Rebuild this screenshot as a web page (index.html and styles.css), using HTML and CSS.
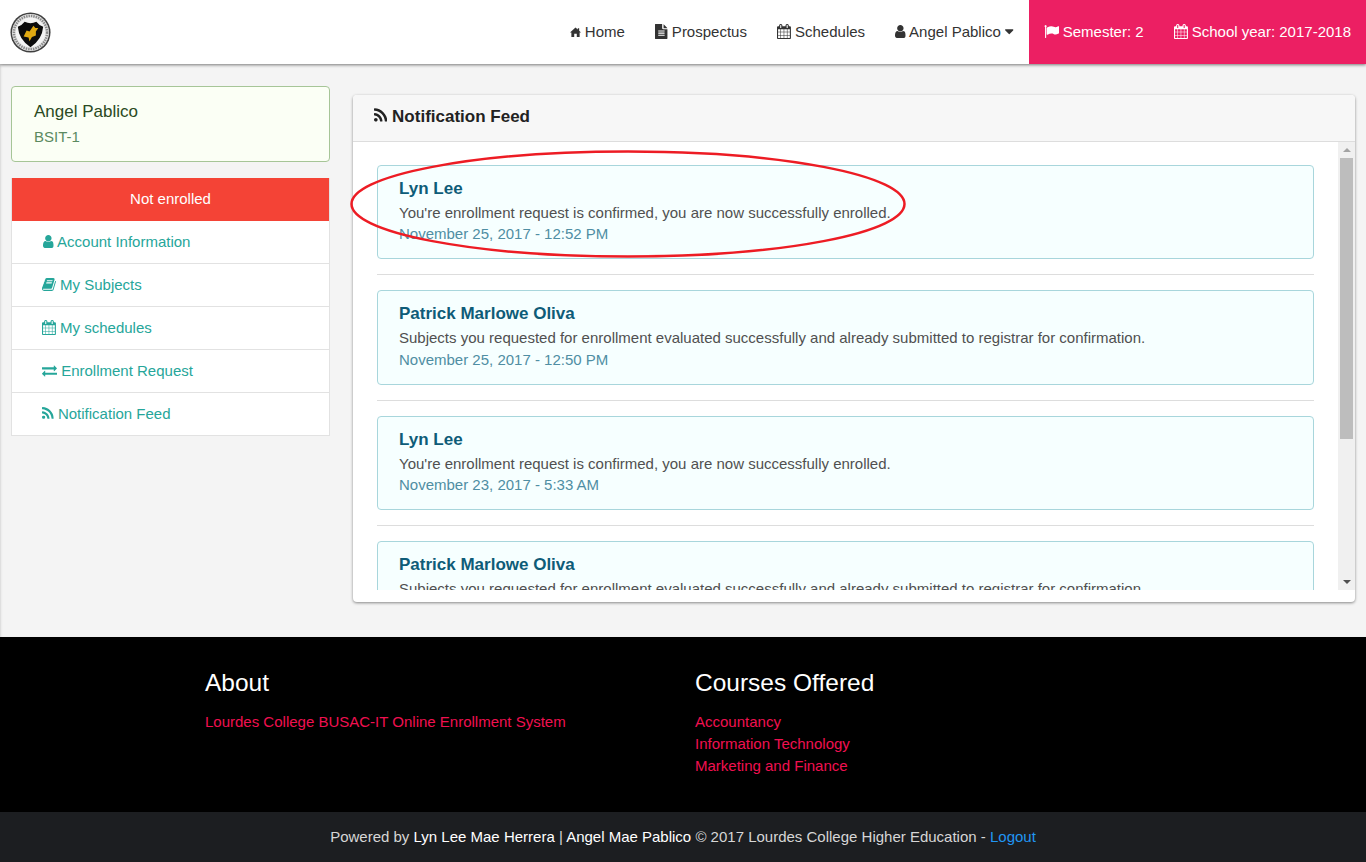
FILE: index.html
```html
<!DOCTYPE html>
<html lang="en">

<head>
    <meta charset="UTF-8">
    <meta name="viewport" content="width=device-width, initial-scale=1.0">
    <title>Notification Feed</title>
    <link rel="stylesheet" href="styles.css">
</head>

<body>
    <svg class="sprite" xmlns="http://www.w3.org/2000/svg">
        <symbol id="i-home" viewBox="0 0 12 12"><path d="M6 1 L8.500 3.200 V1.800 H10 V4.600 L12 6.500 H10.500 V11.500 H7.400 V8 H4.600 V11.500 H1.500 V6.500 H0 Z"/></symbol>
        <symbol id="i-file" viewBox="128 0 1536 1792"><path d="M1596 476q14 14 28 36h-472v-472q22 14 36 28zm-476 164h504v1056q0 40-28 68t-68 28h-1344q-40 0-68-28t-28-68v-1600q0-40 28-68t68-28h800v504q0 40 28 68t68 28zm160 736v-64q0-14-9-23t-23-9h-704q-14 0-23 9t-9 23v64q0 14 9 23t23 9h704q14 0 23-9t9-23zm0-256v-64q0-14-9-23t-23-9h-704q-14 0-23 9t-9 23v64q0 14 9 23t23 9h704q14 0 23-9t9-23zm0-256v-64q0-14-9-23t-23-9h-704q-14 0-23 9t-9 23v64q0 14 9 23t23 9h704q14 0 23-9t9-23z"/></symbol>
        <symbol id="i-calendar" viewBox="0 0 1664 1792"><path d="M128 1664h288v-288h-288v288zm352 0h320v-288h-320v288zm-352-352h288v-320h-288v320zm352 0h320v-320h-320v320zm-352-384h288v-288h-288v288zm736 736h320v-288h-320v288zm-384-736h320v-288h-320v288zm768 736h288v-288h-288v288zm-384-352h320v-320h-320v320zm-352-864v-288q0-13-9.500-22.500t-22.500-9.500h-64q-13 0-22.500 9.500t-9.500 22.500v288q0 13 9.500 22.500t22.500 9.500h64q13 0 22.500-9.500t9.500-22.500zm736 864h288v-320h-288v320zm-384-384h320v-288h-320v288zm384 0h288v-288h-288v288zm32-480v-288q0-13-9.500-22.500t-22.500-9.500h-64q-13 0-22.500 9.500t-9.500 22.500v288q0 13 9.500 22.500t22.500 9.500h64q13 0 22.500-9.500t9.500-22.500zm384-64v1280q0 52-38 90t-90 38h-1408q-52 0-90-38t-38-90v-1280q0-52 38-90t90-38h128v-96q0-66 47-113t113-47h64q66 0 113 47t47 113v96h384v-96q0-66 47-113t113-47h64q66 0 113 47t47 113v96h128q52 0 90 38t38 90z"/></symbol>
        <symbol id="i-user" viewBox="256 0 1280 1792"><path d="M1536 1399q0 109-62.500 187t-150.500 78h-854q-88 0-150.500-78t-62.500-187q0-85 8.500-160.500t31.500-152 58.500-131 94-89 134.500-34.500q131 128 313 128t313-128q76 0 134.500 34.500t94 89 58.500 131 31.500 152 8.500 160.500zm-256-887q0 159-112.500 271.500t-271.500 112.500-271.500-112.500-112.500-271.500 112.500-271.500 271.500-112.500 271.500 112.500 112.500 271.500z"/></symbol>
        <symbol id="i-caret" viewBox="384 0 1024 1792"><path d="M1408 704q0 26-19 45l-448 448q-19 19-45 19t-45-19l-448-448q-19-19-19-45t19-45 45-19h896q26 0 45 19t19 45z"/></symbol>
        <symbol id="i-flag" viewBox="0 0 1792 1792"><path d="M320 256q0 72-64 110v1266q0 13-9.500 22.500t-22.500 9.500h-64q-13 0-22.500-9.500t-9.500-22.500v-1266q-64-38-64-110 0-53 37.500-90.500t90.500-37.500 90.500 37.500 37.500 90.500zm1472 64v763q0 25-12.500 38.500t-39.500 27.500q-215 116-369 116-61 0-123.500-22t-108.500-48-115.500-48-142.500-22q-192 0-464 146-17 9-33 9-26 0-45-19t-19-45v-742q0-32 31-55 21-14 79-43 236-120 421-120 107 0 200 29t219 88q38 19 88 19 54 0 117.500-21t110-47 88-47 54.500-21q26 0 45 19t19 45z"/></symbol>
        <symbol id="i-book" viewBox="64 0 1664 1792"><path d="M1703 478q40 57 18 129l-275 906q-19 64-76.500 107.500t-122.500 43.500h-923q-77 0-148.500-53.500t-99.500-131.500q-24-67-2-127 0-4 3-27t4-37q1-8-3-21.500t-3-19.500q2-11 8-21t16.500-23.500 16.500-23.500q23-38 45-91.500t30-91.500q3-10 .5-30t-.5-28q3-11 17-28t17-23q21-36 42-92t25-90q1-9-2.500-32t.5-28q4-13 22-30.500t22-22.500q19-26 42.500-84.500t27.500-96.500q1-8-3-25.500t-2-26.500q2-8 9-18t18-23 17-21q8-12 16.500-30.500t15-35 16-36 19.500-32 26.500-23.500 36-11.500 47.500 5.500l-1 3q38-9 51-9h761q74 0 114 56t18 130l-274 906q-36 119-71.500 153.500t-128.500 34.500h-869q-27 0-38 15-11 16-1 43 24 70 144 70h923q29 0 56-15.500t35-41.500l300-987q7-22 5-57 38 15 59 43zm-1064 2q-4 13 2 22.500t20 9.500h608q13 0 25.500-9.500t16.500-22.500l21-64q4-13-2-22.500t-20-9.500h-608q-13 0-25.500 9.500t-16.500 22.500zm-83 256q-4 13 2 22.500t20 9.500h608q13 0 25.500-9.500t16.500-22.500l21-64q4-13-2-22.500t-20-9.500h-608q-13 0-25.500 9.500t-16.500 22.500z"/></symbol>
        <symbol id="i-exchange" viewBox="0 0 1792 1792"><path d="M1792 1184v192q0 13-9.500 22.500t-22.500 9.500h-1376v192q0 13-9.500 22.500t-22.500 9.500q-12 0-24-10l-319-320q-9-9-9-22 0-14 9-23l320-320q9-9 23-9 13 0 22.500 9.500t9.500 22.500v192h1376q13 0 22.500 9.500t9.500 22.500zm0-544q0 14-9 23l-320 320q-9 9-23 9-13 0-22.500-9.500t-9.500-22.500v-192h-1376q-13 0-22.500-9.500t-9.500-22.500v-192q0-13 9.500-22.500t22.500-9.500h1376v-192q0-14 9-23t23-9q12 0 24 10l319 319q9 9 9 23z"/></symbol>
        <symbol id="i-rss" viewBox="192 0 1408 1792"><path d="M576 1344q0 80-56 136t-136 56-136-56-56-136 56-136 136-56 136 56 56 136zm512 123q2 28-17 48-18 21-47 21h-135q-25 0-43-16.500t-20-41.500q-22-229-184.500-391.500t-391.500-184.500q-25-2-41.500-20t-16.500-43v-135q0-29 21-47 17-17 43-17h5q160 13 306 80.500t259 181.500q114 113 181.500 259t80.500 306zm512 2q2 27-18 47-18 20-46 20h-143q-26 0-44.500-17.500t-19.500-42.500q-12-215-101-408.500t-231.500-336-336-231.500-408.500-102q-25-1-42.500-19.500t-17.500-43.500v-143q0-28 20-46 18-18 44-18h3q262 13 501.500 120t425.500 294q187 186 294 425.500t120 501.500z"/></symbol>
    </svg>

    <header class="topbar">
        <a class="brand" href="#">
            <svg class="logo" viewBox="0 0 42 42" xmlns="http://www.w3.org/2000/svg">
                <circle cx="21" cy="21" r="20.500" fill="#3f3f3f"/>
                <circle cx="21" cy="21" r="19" fill="#e4e4e4"/>
                <circle cx="21" cy="21" r="17" fill="none" stroke="#8a8a8a" stroke-width="2.600" stroke-dasharray="1.500 1"/>
                <circle cx="21" cy="21" r="15" fill="#f4f4f4"/>
                <path d="M8 15 Q12 14 15 10 Q21 13 27 10 Q30 14 34 15 Q33 28 21 36 Q9 28 8 15 Z" fill="#0c0c0c"/>
                <path d="M14 25 L17 19 L20 20 L24 14 L26 16.500 L29 16.500 L26.500 20 L26.500 24 L22.500 25.500 L20 30 L19 26 Z" fill="#e0a912"/>
            </svg>
        </a>
        <nav class="mainnav">
            <a href="#"><svg class="ico i-home"><use href="#i-home"/></svg> Home</a>
            <a href="#"><svg class="ico i-file"><use href="#i-file"/></svg> Prospectus</a>
            <a href="#"><svg class="ico i-cal"><use href="#i-calendar"/></svg> Schedules</a>
            <a href="#"><svg class="ico i-user"><use href="#i-user"/></svg> Angel Pablico <svg class="ico i-caret"><use href="#i-caret"/></svg></a>
        </nav>
        <div class="termbox">
            <span><svg class="ico"><use href="#i-flag"/></svg> Semester: 2</span>
            <span><svg class="ico i-cal"><use href="#i-calendar"/></svg> School year: 2017-2018</span>
        </div>
    </header>

    <main class="content">
        <aside class="sidebar">
            <div class="profile">
                <h4>Angel Pablico</h4>
                <p>BSIT-1</p>
            </div>
            <ul class="sidemenu">
                <li class="status">Not enrolled</li>
                <li><a href="#"><svg class="ico i-user"><use href="#i-user"/></svg> Account Information</a></li>
                <li><a href="#"><svg class="ico i-cal"><use href="#i-book"/></svg> My Subjects</a></li>
                <li><a href="#"><svg class="ico i-cal"><use href="#i-calendar"/></svg> My schedules</a></li>
                <li><a href="#"><svg class="ico"><use href="#i-exchange"/></svg> Enrollment Request</a></li>
                <li><a href="#"><svg class="ico i-rss"><use href="#i-rss"/></svg> Notification Feed</a></li>
            </ul>
        </aside>

        <section class="feed">
            <div class="feed-head"><svg class="ico i-rss"><use href="#i-rss"/></svg> Notification Feed</div>
            <div class="feed-wrap">
                <div class="feed-body">
                    <div class="note">
                        <h5>Lyn Lee</h5>
                        <p>You're enrollment request is confirmed, you are now successfully enrolled.</p>
                        <small>November 25, 2017 - 12:52 PM</small>
                    </div>
                    <hr>
                    <div class="note">
                        <h5>Patrick Marlowe Oliva</h5>
                        <p>Subjects you requested for enrollment evaluated successfully and already submitted to registrar for confirmation.</p>
                        <small>November 25, 2017 - 12:50 PM</small>
                    </div>
                    <hr>
                    <div class="note">
                        <h5>Lyn Lee</h5>
                        <p>You're enrollment request is confirmed, you are now successfully enrolled.</p>
                        <small>November 23, 2017 - 5:33 AM</small>
                    </div>
                    <hr>
                    <div class="note">
                        <h5>Patrick Marlowe Oliva</h5>
                        <p>Subjects you requested for enrollment evaluated successfully and already submitted to registrar for confirmation.</p>
                    </div>
                </div>
                <div class="scrollbar">
                    <span class="sb-btn"><i class="arrow-up"></i></span>
                    <div class="sb-track"><div class="sb-thumb"></div></div>
                    <span class="sb-btn"><i class="arrow-down"></i></span>
                </div>
            </div>
            <svg class="scribble" viewBox="0 0 560 110" xmlns="http://www.w3.org/2000/svg">
                <ellipse cx="278" cy="55" rx="276.500" ry="52.500" fill="none" stroke="#ed1c24" stroke-width="2.500"/>
            </svg>
        </section>
    </main>

    <footer>
        <div class="footer-top">
            <div class="footer-col">
                <h3>About</h3>
                <a href="#">Lourdes College BUSAC-IT Online Enrollment System</a>
            </div>
            <div class="footer-col">
                <h3>Courses Offered</h3>
                <a href="#">Accountancy</a>
                <a href="#">Information Technology</a>
                <a href="#">Marketing and Finance</a>
            </div>
        </div>
        <div class="footer-bottom">
            Powered by <b>Lyn Lee Mae Herrera</b> | <b>Angel Mae Pablico</b> © 2017 Lourdes College Higher Education - <a href="#">Logout</a>
        </div>
    </footer>
</body>

</html>
```

FILE: styles.css
```css
* {
    box-sizing: border-box;
}

html,
body {
    overflow: hidden;
}

body {
    font-family: "Liberation Sans", Arial, sans-serif;
    font-size: 15px;
    background-color: #f4f4f4;
    color: #333;
    margin: 0;
}

a {
    text-decoration: none;
    color: inherit;
}

.sprite {
    display: none;
}

/* icon widths follow the glyph advance of each icon */
.ico {
    width: 1em;
    height: 1em;
    fill: currentColor;
    vertical-align: -2px;
}

.i-home {
    width: 11px;
    height: 12px;
    vertical-align: -1px;
}

.i-file {
    width: 0.857em;
}

.i-cal {
    width: 0.929em;
}

.i-user {
    width: 0.714em;
}

.i-caret {
    width: 0.571em;
}

.i-rss {
    width: 0.786em;
}

/* top bar */
.topbar {
    display: flex;
    align-items: stretch;
    height: 64px;
    background-color: white;
    box-shadow: 0 1px 3px rgba(0, 0, 0, 0.5);
    position: relative;
}

.brand {
    display: flex;
    align-items: center;
    padding-left: 10px;
    margin-right: auto;
}

.logo {
    width: 41px;
    height: 41px;
    filter: blur(0.4px);
}

.mainnav {
    display: flex;
    align-items: center;
    padding-bottom: 2px;
}

.mainnav a {
    padding: 0 15px;
    white-space: nowrap;
}

.termbox {
    display: flex;
    align-items: center;
    gap: 30px;
    padding: 0 15px 2px;
    background-color: #ec1f63;
    color: white;
    white-space: nowrap;
}

/* main area */
.content {
    display: flex;
    align-items: flex-start;
    gap: 23px;
    height: 573px;
    padding: 22px 11px 0;
    box-shadow: inset 2px 0 2px -1px #d8d8d8;
}

.sidebar {
    width: 319px;
    flex: none;
}

.profile {
    height: 76px;
    padding: 15px 22px;
    background-color: #fbfff5;
    border: 1px solid #a6c597;
    border-radius: 4px;
    margin-bottom: 16px;
}

.profile h4 {
    margin: 0 0 5px;
    font-size: 17px;
    font-weight: normal;
    line-height: 20px;
    color: #2a4a22;
}

.profile p {
    margin: 0;
    line-height: 20px;
    color: #5b8a60;
}

.sidemenu {
    list-style: none;
    margin: 0;
    padding: 0;
    border: 1px solid #e2e2e2;
    border-top: 0;
    background-color: white;
}

.sidemenu li {
    height: 43px;
    line-height: 42px;
    padding-left: 30px;
    color: #26a69a;
    border-bottom: 1px solid #e2e2e2;
}

.sidemenu li:last-child {
    border-bottom: 0;
    height: 42px;
}

.sidemenu .status {
    padding-left: 0;
    text-align: center;
    background-color: #f44336;
    color: white;
    border-bottom: 0;
}

.sidemenu .i-user {
    margin-left: 1px;
}

/* feed panel */
.feed {
    flex: 1;
    margin-top: 9px;
    height: 507px;
    padding-bottom: 12px;
    background-color: white;
    border-radius: 4px;
    box-shadow: 0 1px 3px rgba(0, 0, 0, 0.45);
    position: relative;
}

.feed-head {
    height: 47px;
    line-height: 44px;
    padding-left: 21px;
    font-size: 17px;
    font-weight: bold;
    color: #222;
    background-color: #f7f7f7;
    border-bottom: 1px solid #ddd;
    border-radius: 4px 4px 0 0;
}

.feed-wrap {
    display: flex;
    height: 448px;
}

.feed-body {
    flex: 1;
    overflow: hidden;
    padding: 23px 24px 0;
}

.feed-body hr {
    border: 0;
    border-top: 1px solid #ddd;
    margin: 15px 0;
}

.scrollbar {
    display: flex;
    flex-direction: column;
    width: 17px;
    background-color: #f0f0f0;
}

.sb-btn {
    display: flex;
    align-items: center;
    justify-content: center;
    height: 16px;
}

.sb-track {
    flex: 1;
}

.sb-thumb {
    height: 281px;
    margin: 0 2px;
    background-color: #bdbdbd;
}

.arrow-up,
.arrow-down {
    border-left: 4px solid transparent;
    border-right: 4px solid transparent;
}

.arrow-up {
    border-bottom: 4px solid #a3a3a3;
}

.arrow-down {
    border-top: 4px solid #505050;
}

.note {
    padding: 13px 21px 14px;
    background-color: #f6ffff;
    border: 1px solid #a8d6dc;
    border-radius: 4px;
}

.note h5 {
    margin: 0 0 3px;
    font-size: 17px;
    line-height: 20px;
    color: #0e5c78;
}

.note p {
    margin: 0;
    line-height: 21.170px;
    color: #505050;
}

.note small {
    display: block;
    font-size: 15px;
    line-height: 21.170px;
    color: #4f8ea3;
}

.scribble {
    position: absolute;
    left: -3px;
    top: 54px;
    width: 560px;
    height: 110px;
    pointer-events: none;
}

/* footer */
footer {
    color: #d6d6d6;
}

.footer-top {
    display: flex;
    height: 175px;
    padding: 29px 0 0 205px;
    background-color: black;
}

.footer-col {
    width: 490px;
}

.footer-col h3 {
    margin: 0 0 11px;
    font-size: 24.500px;
    font-weight: normal;
    line-height: 34px;
    color: white;
}

.footer-col a {
    display: block;
    line-height: 22px;
    color: #f01050;
}

.footer-bottom {
    height: 50px;
    line-height: 50px;
    text-align: center;
    background-color: #1c1e21;
}

.footer-bottom b {
    font-weight: normal;
    color: white;
}

.footer-bottom a {
    color: #2196f3;
}
```
